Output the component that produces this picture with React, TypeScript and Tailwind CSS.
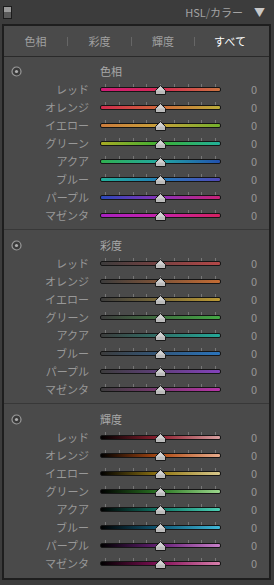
import React from "react";

type Row = { name: string; bg: string };

const hueRows: Row[] = [
  { name: "レッド", bg: "bg-[linear-gradient(to_right,#d01c78,#d42a52_50%,#cc7440)]" },
  { name: "オレンジ", bg: "bg-[linear-gradient(to_right,#d02a4c,#d06a3a_50%,#bcae3a)]" },
  { name: "イエロー", bg: "bg-[linear-gradient(to_right,#cc7c3c,#c8a23a_50%,#74b02c)]" },
  { name: "グリーン", bg: "bg-[linear-gradient(to_right,#a8aa24,#3cb034_50%,#22b09a)]" },
  { name: "アクア", bg: "bg-[linear-gradient(to_right,#30b050,#22a8a2_50%,#2250b0)]" },
  { name: "ブルー", bg: "bg-[linear-gradient(to_right,#22b09a,#227cb8_50%,#5048b8)]" },
  { name: "パープル", bg: "bg-[linear-gradient(to_right,#2a48b8,#8a32b8_50%,#c82278)]" },
  { name: "マゼンタ", bg: "bg-[linear-gradient(to_right,#a822c0,#c822aa_50%,#d42260)]" },
];

const satRows: Row[] = [
  { name: "レッド", bg: "bg-[linear-gradient(to_right,#3c3c3c,#b44848)]" },
  { name: "オレンジ", bg: "bg-[linear-gradient(to_right,#3c3c3c,#c46c34)]" },
  { name: "イエロー", bg: "bg-[linear-gradient(to_right,#3c3c3c,#bc9a34)]" },
  { name: "グリーン", bg: "bg-[linear-gradient(to_right,#3c3c3c,#44a844)]" },
  { name: "アクア", bg: "bg-[linear-gradient(to_right,#3c3c3c,#24a898)]" },
  { name: "ブルー", bg: "bg-[linear-gradient(to_right,#3c3c3c,#2a74bc)]" },
  { name: "パープル", bg: "bg-[linear-gradient(to_right,#3c3c3c,#8442bc)]" },
  { name: "マゼンタ", bg: "bg-[linear-gradient(to_right,#3c3c3c,#b834a8)]" },
];

const lumRows: Row[] = [
  { name: "レッド", bg: "bg-[linear-gradient(to_right,#000,#902030_50%,#d8a0a0)]" },
  { name: "オレンジ", bg: "bg-[linear-gradient(to_right,#000,#b04c14_50%,#e8ac8c)]" },
  { name: "イエロー", bg: "bg-[linear-gradient(to_right,#000,#947814_50%,#d8c88c)]" },
  { name: "グリーン", bg: "bg-[linear-gradient(to_right,#000,#2c7824_50%,#9cd88c)]" },
  { name: "アクア", bg: "bg-[linear-gradient(to_right,#000,#107868_50%,#4cd0b4)]" },
  { name: "ブルー", bg: "bg-[linear-gradient(to_right,#000,#105a78_50%,#40b8d8)]" },
  { name: "パープル", bg: "bg-[linear-gradient(to_right,#000,#682078_50%,#c880c8)]" },
  { name: "マゼンタ", bg: "bg-[linear-gradient(to_right,#000,#841058_50%,#d880ac)]" },
];

const Target = () => (
  <svg width="11" height="11" viewBox="0 0 11 11">
    <circle cx="5.5" cy="5.5" r="4.5" fill="#3a3a3a" stroke="#9a9a9a" strokeWidth="1.2" />
    <circle cx="5.5" cy="5.5" r="1.6" fill="#b0b0b0" />
  </svg>
);

const Slider = ({ bg }: { bg: string }) => (
  <div className="relative w-[121px] h-[18px] flex items-center">
    <div className="absolute left-[5px] top-[4px] w-[111px] flex justify-between">
      {Array.from({ length: 9 }).map((_, i) => (
        <div key={i} className="w-px h-[3px] bg-[#767676]" />
      ))}
    </div>
    <div className={`w-full h-[5px] rounded-[2px] border border-[#151515] ${bg}`} />
    <svg className="absolute left-[55px] top-[5px]" width="11" height="10" viewBox="0 0 11 10">
      <path d="M5.5 0.5 L10.5 5.5 L10.5 9.5 L0.5 9.5 L0.5 5.5 Z" fill="#bcbcbc" stroke="#1a1a1a" strokeWidth="1" />
      <path d="M5.5 1.5 L9.5 5.5 L1.5 5.5 Z" fill="#d2d2d2" />
    </svg>
  </div>
);

const Section = ({ title, rows, first }: { title: string; rows: Row[]; first?: boolean }) => (
  <div className={`${first ? "pt-[5px]" : "pt-[6px] border-t border-[#383838]"} pb-[5px]`}>
    <div className="h-[18px] flex items-center">
      <div className="w-[85px] pl-[7px] flex items-center">
        <Target />
      </div>
      <div className="ml-[11px] text-[11px] text-[#a8a8a8]">{title}</div>
    </div>
    {rows.map((r) => (
      <div key={r.name} className="h-[18px] flex items-center">
        <div className="w-[85px] text-right text-[11px] text-[#989898] leading-none">{r.name}</div>
        <div className="ml-[11px]">
          <Slider bg={r.bg} />
        </div>
        <div className="w-[36px] text-right text-[11px] text-[#969696] leading-none">0</div>
      </div>
    ))}
  </div>
);

export default function App() {
  return (
    <div
      className="w-[274px] h-[585px] bg-[#3c3c3c] overflow-hidden"
      style={{ fontFamily: '"Noto Sans CJK JP", "Noto Sans", sans-serif' }}
    >
      <div className="h-[24px] flex items-center px-[3px]">
        <div className="w-[9px] h-[13px] border border-[#1c1c1c] flex flex-col">
          <div className="flex-1 bg-[#9a9a9a]" />
          <div className="flex-1 bg-[#5a5a5a]" />
        </div>
        <div className="ml-auto text-[11px] text-[#a4a4a4]">
          HSL<span className="text-[#8a8a8a]">/</span>カラー
        </div>
        <div className="ml-[11px] mr-[6px] text-[11px] text-[#c8c8c8] leading-none">▼</div>
      </div>
      <div className="ml-[2px] w-[269px] h-[556px] border-2 border-[#1e1e1e] bg-[#4a4a4a]">
        <div className="h-[30px] flex items-center text-[11px] text-[#a0a0a0]">
          <div className="w-[63px] text-center">色相</div>
          <div className="w-px h-[9px] bg-[#666666]" />
          <div className="w-[63px] text-center">彩度</div>
          <div className="w-px h-[9px] bg-[#666666]" />
          <div className="w-[62px] text-center">輝度</div>
          <div className="w-px h-[9px] bg-[#666666]" />
          <div className="w-[70px] text-center text-white">すべて</div>
        </div>
        <div className="border-t border-[#2a2a2a]">
          <Section title="色相" rows={hueRows} first />
          <Section title="彩度" rows={satRows} />
          <Section title="輝度" rows={lumRows} />
        </div>
      </div>
    </div>
  );
}
